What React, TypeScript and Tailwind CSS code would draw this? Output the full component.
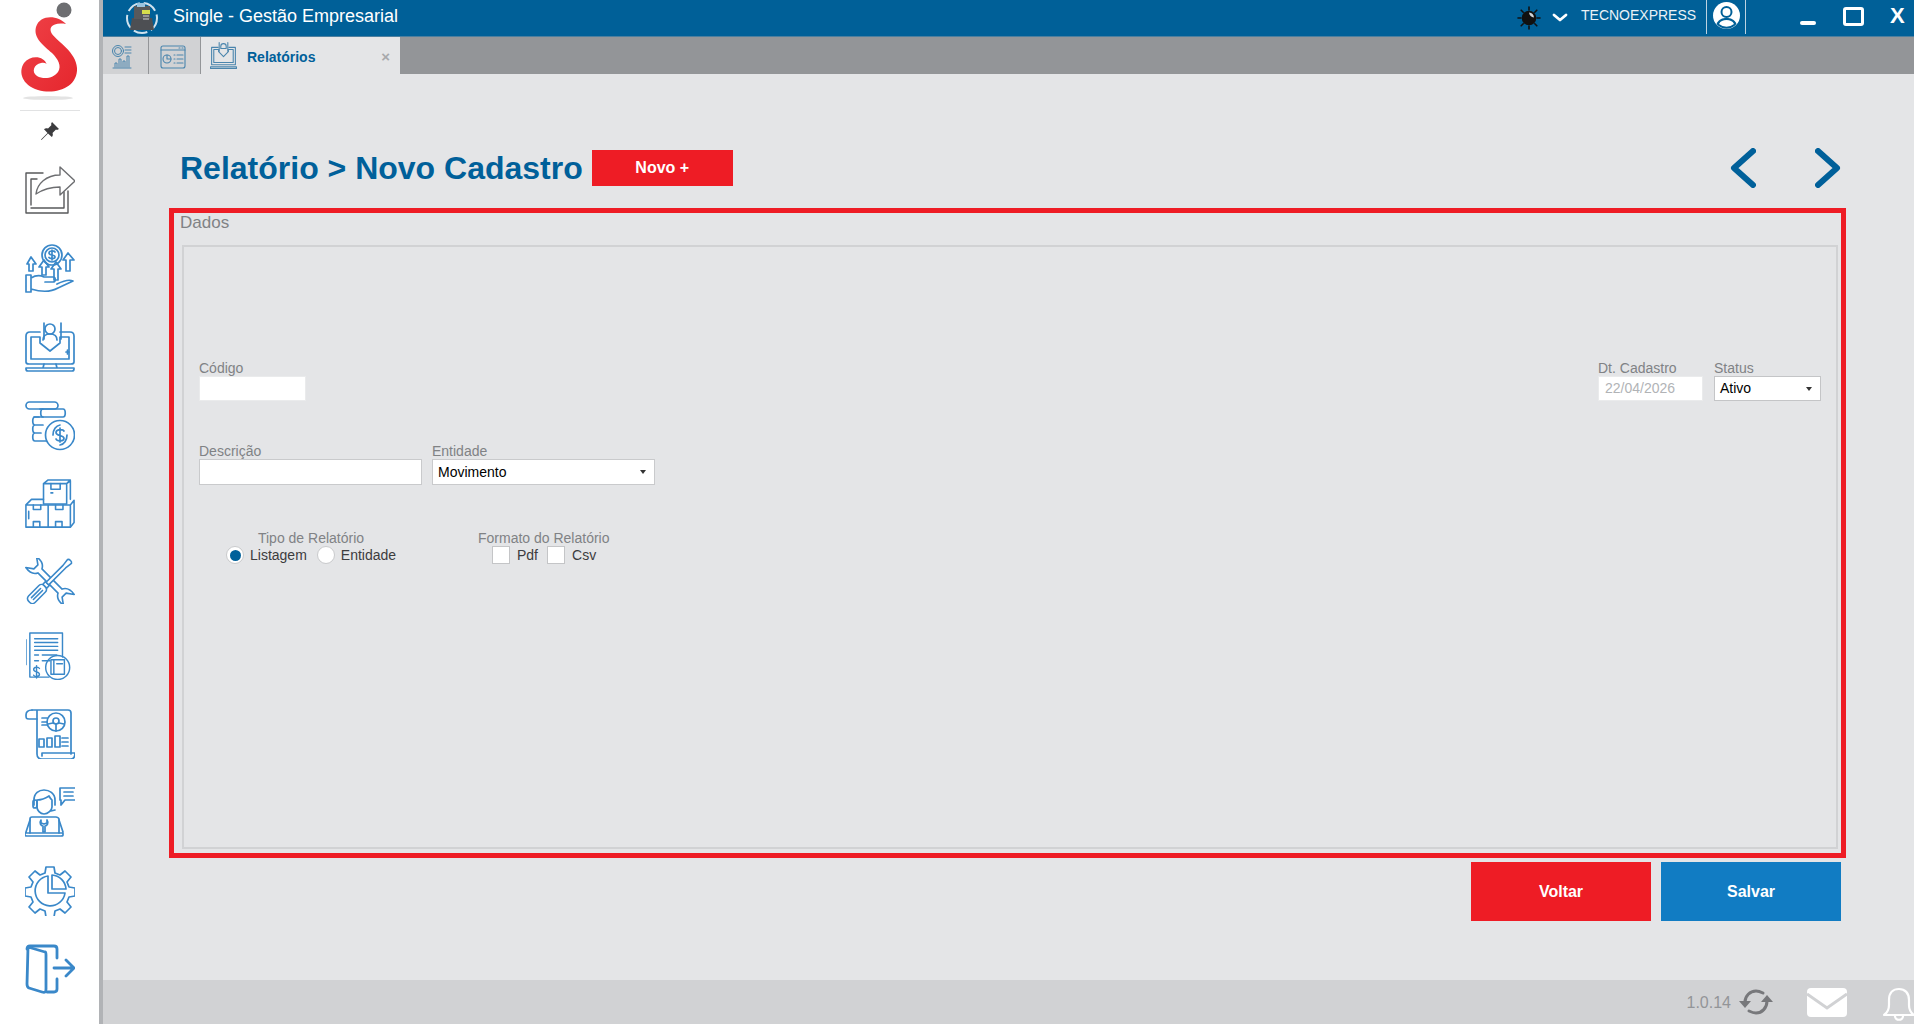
import React from "react";

const C = "#3a88c9";

function Ico({ children, w = 50, h = 50, stroke = C, sw = 1.7, vb = "0 0 50 50" }: { children: React.ReactNode; w?: number; h?: number; stroke?: string; sw?: number; vb?: string }) {
  return (
    <svg width={w} height={h} viewBox={vb} fill="none" stroke={stroke} strokeWidth={sw} strokeLinecap="round" strokeLinejoin="round" className="block shrink-0">
      {children}
    </svg>
  );
}

const Share = () => (
  <Ico stroke="#58595b" sw={1.4}>
    <path d="M18 8H1v40h42V26" />
    <path d="M6 40V14h6M39 27v16H6" />
    <path d="M11 29C12 19 21 10 35 10V2l15 14-15 14v-8c-10 0-18 3-24 7z" fill="#ffffff" stroke="#6d6e71" />
  </Ico>
);
const Hand = () => (
  <Ico>
    <circle cx="27" cy="11" r="10" />
    <circle cx="27" cy="11" r="7" />
    <path d="M27 6v10M30 8c-1-1.500-6-1.500-6 1 0 3 6 1 6 4 0 2-5 2-6 .5" />
    <path d="M1 31h5v17H1zM6 34c5-3 9-3 13-1h9c3 0 3 5 0 5h-8M6 45c10 3 20 3 27-1l15-7c-4-2-10 0-16 3" />
    <path d="M2 20l4-7 5 7H8v7H4v-7zM14 23l5-7 5 7h-3v8h-4v-8zM26 25l5-7 5 7h-3v11h-4V25zM38 16l5-7 6 7h-4v11h-4V16z" />
  </Ico>
);
const Monitor = () => (
  <Ico>
    <path d="M15 10H5c-2 0-4 1-4 4v26c0 1 1 2 3 2h42c2 0 3-1 3-2V14c0-3-2-4-4-4H35" />
    <path d="M6 15h9v6l10 8 10-8v-6h9v22H6zM19 1v16M36 1v16" />
    <circle cx="25" cy="7" r="5" />
    <path d="M18 18c0-4 3-6 7-6s7 2 7 6M41 30h3M42.500 28v4" />
    <path d="M19 42l-1 4M31 42l1 4M1 46h48v1c0 1-1 2-2 2H3c-1 0-2-1-2-2z" />
  </Ico>
);
const Coins = () => (
  <Ico>
    <rect x="1" y="1" width="32" height="7" rx="3.500" />
    <path d="M15 8h23c3 0 3 8 0 8H9" />
    <path d="M18 8c-3 0-3 8 0 8M14 16H10c-3 0-3 8 0 8h8M10 24c-3 0-3 8 0 8h6M10 32c-3 0-3 8 0 8h12" />
    <circle cx="35" cy="34" r="14.500" fill="#fff" />
    <path d="M28 34a8 10 0 0 1 7-10M42 34a8 10 0 0 1-7 10" />
    <path d="M35 27v14M39 30c-1-2-8-2-8 1.500 0 4 8 2 8 6 0 3-7 3-8 .5" />
  </Ico>
);
const Boxes = () => (
  <Ico vb="0 0 54 52">
    <path d="M20 4h25v22H20zM20 4l5-4h24l-4 4M45 4l4-3v20" />
    <path d="M28 4v6h10V4M30 14h-2M1 27h24v24H1zM25 27h24v24H25zM1 27l6-6h13M49 27l4-5v24l-4 5" />
    <path d="M9 27v5h8v-5M33 27v5h8v-5M9 51v-6h7v6M33 51v-6h7v6M4 34v8" />
  </Ico>
);
const Tools = () => (
  <Ico vb="0 0 50 46" h={46}>
    <g transform="translate(25 23) rotate(45) scale(0.950)">
      <path d="M-15 -3H15C17 -7 22 -9 28 -8L21 -3V3L28 8C22 9 17 7 15 3H-15C-17 7 -22 9 -28 8L-21 3V-3L-28 -8C-22 -9 -17 -7 -15 -3Z" />
    </g>
    <g transform="translate(25 23) rotate(-45) scale(0.920)">
      <rect x="-32" y="-5" width="24" height="10" rx="4" fill="#fff" />
      <path d="M-8 -3H-4V3H-8Z" fill="#fff" />
      <path d="M-4 -2H22L30 -3C32 -2 32 2 30 3L22 2H-4Z" fill="#fff" />
      <path d="M-27 -1.500H-13M-27 1.500H-13" />
    </g>
  </Ico>
);
const Receipt = () => (
  <Ico vb="0 0 50 50" w={48} h={48} sw={1.5}>
    <path d="M4 1h34v25M24 47H4V1M0 8v26" />
    <path d="M9 7h24M9 11h24M9 15h24M9 19h24M9 24h4M17 24h15M9 30h4M17 30h8" />
    <path d="M14 38c-1-2-6-2-6 1 0 3 6 2 6 5 0 3-5 3-6 1M11 35v13" />
    <circle cx="33" cy="37" r="12.500" />
    <path d="M26 29h14v15H26zM29 29v15M32 33h6" />
  </Ico>
);
const Doc = () => (
  <Ico>
    <path d="M7 1h36c2 0 3 1 3 3v41M12 1v44c0 3 2 5 5 5h29c3 0 4-3 4-6H17v3" />
    <path d="M7 1C3 1 1 3 1 6c0 3 0 4 3 4h8" />
    <circle cx="31" cy="13" r="9" />
    <circle cx="31" cy="12" r="3" />
    <path d="M23 15l5-1M39 15l-5-1M31 15v7M17 9h5M17 13h5M17 16h5" />
    <rect x="14" y="30" width="5" height="8" />
    <rect x="22" y="29" width="5" height="9" />
    <rect x="30" y="27" width="5" height="11" />
    <path d="M37 29h6M37 33h6M37 37h6" />
  </Ico>
);
const Support = () => (
  <Ico>
    <path d="M35 1h16v12H40l-4 5v-5h-1zM39 5h9M39 9h9" />
    <path d="M9 18V13C9 6 14 3 19 3s11 3 11 10v5" />
    <path d="M12 13c4 0 9-2 12-4 1 2 2 3 3 4v7c0 3-4 7-8 7s-7-4-7-7z" />
    <rect x="8" y="13" width="4" height="8" rx="2" />
    <path d="M26 24l4-1M5 46V32c0-1 1-2 2-2h24c1 0 3 1 3 2v14" />
    <path d="M0 46h38v2c0 1-1 1-2 1H2c-1 0-2 0-2-1zM1 45l4-12M38 45l-4-12" />
    <path d="M16 33c-2 3 0 6 2 6v6h2v-6c2 0 4-3 2-6v3l-3 1-3-1z" />
  </Ico>
);
const Gear = () => (
  <Ico>
    <path d="M21 1h8l1 6 5 2 5-4 6 6-4 5 2 5 6 1v8l-6 1-2 5 4 5-6 6-5-4-5 2-1 6h-8l-1-6-5-2-5 4-6-6 4-5-2-5-6-1v-8l6-1 2-5-4-5 6-6 5 4 5-2z" />
    <path d="M23 10A15 15 0 1 0 40 27H23Z" />
    <path d="M27 9A15 15 0 0 1 41 23H27Z" />
  </Ico>
);
const Door = () => (
  <Ico sw={2.800}>
    <path d="M2 5c0-2 1-3 3-3h24c3 0 3 2 3 3v9M32 35v10c0 2-1 3-3 3h-7" />
    <path d="M3 3l17 5c1 0 1 1 1 3v34c0 3-1 4-4 3L4 44c-2-1-2-2-2-4z" />
    <path d="M29 24h20M41 16l8 8-8 8" />
  </Ico>
);

const Logo = () => (
  <svg width="99" height="110" viewBox="0 0 99 110" className="block">
    <defs>
      <linearGradient id="lg" x1="0" y1="0" x2="1" y2="1">
        <stop offset="0" stopColor="#ef4147" />
        <stop offset="1" stopColor="#e5262d" />
      </linearGradient>
    </defs>
    <circle cx="64" cy="10" r="7.500" fill="#6d6e71" />
    <ellipse cx="48" cy="98" rx="25" ry="2" fill="#e3e3e3" />
    <path
      d="M66 24C58 15 40 14 36 27 33 38 44 46 52 53 58 59 62 66 58 72 54 78 44 80 37 76 31 72 34 64 41 63 45 62 47 64 47 65 44 55 30 55 24 63 18 72 22 85 38 90 55 95 78 88 77 68 76 52 58 42 52 34 48 28 52 22 66 24Z"
      fill="url(#lg)"
    />
  </svg>
);

const Pin = () => (
  <svg width="20" height="20" viewBox="0 0 20 20" className="block" fill="#3c3c3e">
    <path d="M12 1l7 7-2 1-1-.5-3.500 3.500c.7 1.500.3 3-.7 4L8 12.500 1.500 19 1 18.500 7.500 12 4 8.200c1-1 2.500-1.400 4-.7L11.500 4 11 3z" />
  </svg>
);

const Sidebar = () => (
  <aside className="w-[103px] shrink-0 h-full bg-white border-r-4 border-[#b1b3b6] flex flex-col items-center">
    <div className="h-[110px] w-full shrink-0">
      <Logo />
    </div>
    <div className="w-[60px] h-px bg-[#e1e2e3] shrink-0" />
    <div className="mt-[10px] h-[20px] shrink-0">
      <Pin />
    </div>
    <div className="mt-[24px] flex flex-col items-center gap-[28.5px]">
      <Share />
      <Hand />
      <Monitor />
      <Coins />
      <Boxes />
      <Tools />
      <Receipt />
      <Doc />
      <Support />
      <Gear />
      <Door />
    </div>
  </aside>
);

const Header = () => (
  <header className="h-[37px] shrink-0 bg-[#006098] flex items-center text-white pl-[22px] border-b border-[#4c7f9f]">
    <svg width="34" height="33" viewBox="0 0 34 33" className="block shrink-0">
      <circle cx="17" cy="16" r="15" fill="none" stroke="#cfe2ee" strokeWidth="2" strokeDasharray="14 4" />
      <path d="M7 16h20l2 12H5z" fill="#4d4f53" />
      <rect x="9" y="4" width="16" height="13" fill="#58595b" />
      <rect x="17" y="8" width="8" height="4" fill="#d6de4c" />
      <rect x="12" y="1" width="8" height="4" fill="#9cc4de" />
      <path d="M18 14h6M18 17h6" stroke="#d1d3d4" strokeWidth="1" />
    </svg>
    <span className="ml-[14px] text-[18px] leading-none -mt-[5px]">Single - Gestão Empresarial</span>
    <div className="ml-auto flex items-center h-full">
      <svg width="24" height="24" viewBox="0 0 24 24" className="block mr-[11px]" stroke="#111" strokeWidth="1.600" strokeLinecap="round" fill="#111">
        <path d="M12 1v3M12 20v3M1 12h3M20 12h3M4.200 4.200l2 2M17.800 17.800l2 2M4.200 19.800l2-2M17.800 6.200l2-2" />
        <circle cx="12" cy="12" r="6.500" />
        <path d="M12 6.500a5.500 5.500 0 0 1 5 5 6 6 0 0 1-5-5z" fill="#cfd4d8" stroke="none" />
      </svg>
      <svg width="16" height="10" viewBox="0 0 16 10" className="block mr-[13px]" fill="none" stroke="#fff" strokeWidth="2.800" strokeLinecap="round" strokeLinejoin="round">
        <path d="M2 2l6 5 6-5" />
      </svg>
      <span className="text-[14px] leading-none -mt-[6px] text-[#eaf2f7] w-[125px]">TECNOEXPRESS</span>
      <div className="h-[34px] self-start w-[40px] border-x border-[#bcd3e2] flex justify-center pt-[2px]">
        <svg width="27" height="27" viewBox="0 0 27 27" className="block">
          <circle cx="13.500" cy="13.500" r="13.500" fill="#fff" />
          <circle cx="13.500" cy="10" r="5" fill="none" stroke="#006098" strokeWidth="2" />
          <path d="M3.500 22c2-5 6-6 10-6s8 1 10 6a13 13 0 0 1-20 0z" fill="#006098" />
          <path d="M6 22c1.500-3 4-4 7.500-4s6 1 7.500 4a12 12 0 0 1-15 0z" fill="#fff" />
        </svg>
      </div>
      <div className="w-[16px] h-[4px] rounded-[2px] bg-white ml-[54px] mt-[9px]" />
      <div className="w-[21px] h-[19px] border-[3px] border-white rounded-[3px] ml-[27px] -mt-[4px]" />
      <span className="w-[15px] ml-[26px] mr-[9px] -mt-[5px] text-[22px] leading-none font-bold">X</span>
    </div>
  </header>
);

const TabIconA = () => (
  <Ico w={21} h={24} vb="0 0 21 24" stroke="#4a85ad" sw={1}>
    <circle cx="7" cy="6" r="5.500" />
    <circle cx="7" cy="6" r="3.500" />
    <path d="M14 2h6M14 5h6M14 8h6M2 23h18M4 22v-4h2v4M8 22v-8h2v8M12 22v-6h2v6M16 22V11h2v11" />
  </Ico>
);
const TabIconB = () => (
  <Ico w={26} h={24} vb="0 0 26 24" stroke="#4a85ad" sw={1.100}>
    <rect x="1" y="1" width="24" height="22" rx="2" />
    <path d="M1 5h24M19 3h1M22 3h1" />
    <circle cx="7" cy="14" r="4" />
    <path d="M7 10v4h4M14 10h1M17 10h6M14 14h1M17 14h6M14 18h1M17 18h6" />
  </Ico>
);
const TabIconC = () => (
  <Ico w={27} h={27} vb="0 0 50 50" stroke="#4a85ad" sw={2}>
    <path d="M15 10H3v32h44V10H35M7 14h9v4l9 9 9-9v-4h9v24H7z" />
    <path d="M17 1v16M33 1v16M20 12v-4a5 5 0 0 1 10 0v4zM1 46h48v3H1z" />
  </Ico>
);

const Tabs = () => (
  <nav className="h-[37px] shrink-0 bg-[#939598] flex items-stretch">
    <div className="w-[46px] bg-[#d1d2d4] border-r border-[#939598] flex items-center justify-center pt-[2px] pr-[9px]">
      <TabIconA />
    </div>
    <div className="w-[52px] bg-[#d1d2d4] border-r border-[#939598] flex items-center justify-center pt-[2px] pr-[4px]">
      <TabIconB />
    </div>
    <div className="w-[199px] bg-[#e4e5e7] flex items-center pl-[9px]">
      <TabIconC />
      <span className="ml-[10px] mt-[3px] text-[14px] font-bold text-[#00609a]">Relatórios</span>
      <span className="ml-auto mr-[10px] mt-[1px] text-[15px] font-bold leading-none text-[#a7a9ac]">×</span>
    </div>
  </nav>
);

const Label = ({ children }: { children: React.ReactNode }) => (
  <div className="text-[14px] leading-[16px] text-[#808285]">{children}</div>
);

const Caret = () => (
  <span className="ml-auto w-0 h-0 border-x-[3.500px] border-x-transparent border-t-[4px] border-t-[#333]" />
);

const Radio = ({ checked }: { checked?: boolean }) => (
  <span className="w-[18px] h-[18px] rounded-full bg-white border border-[#c9cacc] flex items-center justify-center shrink-0">
    {checked && <span className="w-[11px] h-[11px] rounded-full bg-[#00609a]" />}
  </span>
);

const Check = () => <span className="block w-[18px] h-[18px] bg-white border border-[#c4c5c7] shrink-0" />;

const Form = () => (
  <section className="mt-[20px] ml-[66px] w-[1677px] h-[650px] border-[5px] border-[#ee1c25] px-[8px]">
    <div className="text-[17px] leading-[20px] text-[#808285] -ml-[2px]">Dados</div>
    <div className="mt-[12px] w-[1656px] h-[604px] border-2 border-[#d1d2d4] px-[15px] pt-[113px]">
      <div className="flex justify-between items-start">
        <div>
          <Label>Código</Label>
          <div className="w-[107px] h-[25px] bg-white border border-[#eaebec]" />
        </div>
        <div className="flex gap-[11px]">
          <div>
            <Label>Dt. Cadastro</Label>
            <div className="w-[105px] h-[25px] bg-white border border-[#eaebec] pl-[6px] text-[14px] leading-[23px] text-[#b1b3b6]">22/04/2026</div>
          </div>
          <div>
            <Label>Status</Label>
            <div className="w-[107px] h-[25px] bg-white border border-[#c4c5c7] pl-[5px] pr-[8px] flex items-center text-[14px] text-black">
              Ativo
              <Caret />
            </div>
          </div>
        </div>
      </div>
      <div className="mt-[42px] flex gap-[10px]">
        <div>
          <Label>Descrição</Label>
          <div className="w-[223px] h-[26px] bg-white border border-[#c9cacc]" />
        </div>
        <div>
          <Label>Entidade</Label>
          <div className="w-[223px] h-[26px] bg-white border border-[#c9cacc] pl-[5px] pr-[8px] flex items-center text-[14px] text-black">
            Movimento
            <Caret />
          </div>
        </div>
      </div>
      <div className="mt-[45px] flex">
        <div className="ml-[27px] w-[170px]">
          <div className="text-center w-[170px] text-[14px] leading-[16px] text-[#808285]">Tipo de Relatório</div>
          <div className="flex items-center text-[14px] leading-[18px] text-[#3c3c3e]">
            <Radio checked />
            <span className="ml-[6px]">Listagem</span>
            <span className="ml-[10px]"><Radio /></span>
            <span className="ml-[6px]">Entidade</span>
          </div>
        </div>
        <div className="ml-[82px]">
          <div className="text-[14px] leading-[16px] text-[#808285]">Formato do Relatório</div>
          <div className="ml-[14px] flex items-center text-[14px] leading-[18px] text-[#3c3c3e]">
            <Check />
            <span className="ml-[7px]">Pdf</span>
            <span className="ml-[9px]"><Check /></span>
            <span className="ml-[7px]">Csv</span>
          </div>
        </div>
      </div>
    </div>
  </section>
);

const Footer = () => (
  <footer className="mt-auto h-[44px] shrink-0 bg-[#d1d2d4] flex items-center justify-end overflow-hidden">
    <span className="text-[16px] text-[#939598] mr-[7px] mt-[1px]">1.0.14</span>
    <svg width="36" height="28" viewBox="0 0 36 28" className="block" fill="none" stroke="#77787b" strokeWidth="3" strokeLinecap="round">
      <path d="M7 14c0-6 5-11 11-11 3 0 5 1 7 2M29 13c0 7-5 12-11 12-3 0-5-1-7-2" />
      <path d="M1 13h12l-6 7z" fill="#77787b" stroke="none" />
      <path d="M23 14h12l-6-7z" fill="#77787b" stroke="none" />
    </svg>
    <svg width="40" height="29" viewBox="0 0 40 29" className="block ml-[33px]">
      <rect width="40" height="29" rx="4" fill="#fff" />
      <path d="M0 6l20 14L40 6" fill="none" stroke="#d1d2d4" strokeWidth="3" />
    </svg>
    <svg width="33" height="34" viewBox="0 0 33 34" className="block ml-[35px] -mr-[1px] mt-[4px]" fill="none" stroke="#fff" strokeWidth="2.200" strokeLinejoin="round">
      <path d="M2 28c3-2 5-5 5-10V13C7 6 11 2 17 2s10 4 10 11v5c0 5 2 8 5 10z" />
      <path d="M13 29c0 5 8 5 8 0" />
    </svg>
  </footer>
);

const Chevron = ({ d }: { d: string }) => (
  <svg width="26" height="40" viewBox="0 0 26 40" className="block" fill="none" stroke="#00609a" strokeWidth="6" strokeLinecap="round" strokeLinejoin="round">
    <path d={d} />
  </svg>
);

export default function App() {
  return (
    <div className="w-[1914px] h-[1024px] flex overflow-hidden bg-[#e4e5e7] font-['Liberation_Sans',sans-serif]">
      <Sidebar />
      <main className="flex-1 min-w-0 flex flex-col">
        <Header />
        <Tabs />
        <div className="mt-[74px] h-[40px] flex items-center pl-[77px]">
          <h1 className="text-[32px] leading-none font-bold text-[#00609a]">Relatório &gt; Novo Cadastro</h1>
          <button className="ml-[9px] w-[141px] h-[36px] bg-[#ee1c25] text-white text-[16px] font-bold">Novo +</button>
          <div className="ml-auto mr-[73px] flex gap-[59px]">
            <Chevron d="M23 3L4 20l19 17" />
            <Chevron d="M3 3l19 17L3 37" />
          </div>
        </div>
        <Form />
        <div className="mt-[4px] ml-[1368px] flex gap-[10px]">
          <button className="w-[180px] h-[59px] bg-[#ee1c25] text-white text-[16px] font-bold">Voltar</button>
          <button className="w-[180px] h-[59px] bg-[#117cc3] text-white text-[16px] font-bold">Salvar</button>
        </div>
        <Footer />
      </main>
    </div>
  );
}
